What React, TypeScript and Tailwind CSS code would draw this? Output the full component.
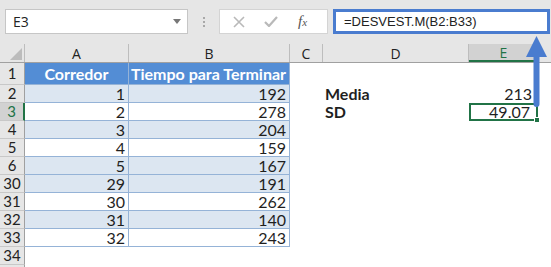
import React from "react";

const cellFont = { fontFamily: "Lato, 'Open Sans', sans-serif" };

type Row = { n: string; a?: string; b?: string; band?: boolean; header?: boolean; d?: string; e?: string; active?: boolean };

const rows: Row[] = [
  { n: "1", a: "Corredor", b: "Tiempo para Terminar", header: true },
  { n: "2", a: "1", b: "192", band: true, d: "Media", e: "213" },
  { n: "3", a: "2", b: "278", d: "SD", e: "49.07", active: true },
  { n: "4", a: "3", b: "204", band: true },
  { n: "5", a: "4", b: "159" },
  { n: "6", a: "5", b: "167", band: true },
  { n: "30", a: "29", b: "191", band: true },
  { n: "31", a: "30", b: "262" },
  { n: "32", a: "31", b: "140", band: true },
  { n: "33", a: "32", b: "243" },
  { n: "34" },
];

export default function App() {
  return (
    <div className="relative w-[551px] h-[267px] overflow-hidden bg-white text-[#1f1f1f]">
      {/* Formula bar area */}
      <div className="h-[44px] bg-[#e6e6e6] flex items-start pt-[9px]">
        <div className="ml-[5px] w-[183px] h-[25px] bg-white border border-[#c6c6c6] flex items-center justify-between pl-[7px] pr-[6px]">
          <span className="text-[14px] text-[#222]" style={{ fontFamily: "'Open Sans', sans-serif" }}>E3</span>
          <svg width="8" height="5" viewBox="0 0 8 5"><path d="M0 0h8L4 5z" fill="#777" /></svg>
        </div>
        <div className="w-[31px] h-[25px] flex flex-col items-center justify-center gap-[2px]">
          <div className="w-[2px] h-[2px] bg-[#a8a8a8]" />
          <div className="w-[2px] h-[2px] bg-[#a8a8a8]" />
          <div className="w-[2px] h-[2px] bg-[#a8a8a8]" />
        </div>
        <div className="w-[109px] h-[25px] bg-white border border-[#d4d4d4] flex items-center">
          <svg className="ml-[13px]" width="12" height="12" viewBox="0 0 12 12"><path d="M1 1l10 10M11 1L1 11" stroke="#b9b9b9" strokeWidth="1.6" /></svg>
          <svg className="ml-[19px]" width="14" height="11" viewBox="0 0 14 11"><path d="M1 6l4 4L13 1" stroke="#b9b9b9" strokeWidth="2.2" fill="none" /></svg>
          <span className="ml-[20px] text-[15px] italic text-[#555]" style={{ fontFamily: "'Liberation Serif', serif" }}>f<span className="text-[11px]">x</span></span>
        </div>
        <div className="ml-[5px] w-[217px] h-[25px] bg-white border-[3px] border-[#4a7ccf] flex items-center pl-[8px]">
          <span className="text-[13px] text-[#222]" style={{ fontFamily: "'Liberation Sans', sans-serif" }}>=DESVEST.M(B2:B33)</span>
        </div>
      </div>

      {/* Column header */}
      <div className="flex h-[19px] bg-[#e6e6e6] border-b border-[#a0a0a0] text-[14px] text-[#222]" style={{ fontFamily: "'Open Sans', sans-serif" }}>
        <div className="w-[25px] shrink-0 relative border-r border-[#bdbdbd]">
          <svg className="absolute right-[2px] bottom-[2px]" width="12" height="12" viewBox="0 0 12 12"><path d="M12 0V12H0z" fill="#bcbcbc" /></svg>
        </div>
        <div className="w-[104px] shrink-0 border-r border-[#bdbdbd] flex items-center justify-center">A</div>
        <div className="w-[161px] shrink-0 border-r border-[#bdbdbd] flex items-center justify-center">B</div>
        <div className="w-[33px] shrink-0 border-r border-[#bdbdbd] flex items-center justify-center">C</div>
        <div className="w-[146px] shrink-0 border-r border-[#bdbdbd] flex items-center justify-center">D</div>
        <div className="w-[69px] shrink-0 bg-[#d2d2d2] border-b-2 border-[#217346] text-[#217346] flex items-center justify-center">E</div>
        <div className="flex-1 border-l border-[#bdbdbd]" />
      </div>

      {/* Rows */}
      {rows.map((r, i) => (
        <div key={r.n} className={`flex ${i === 0 ? "h-[22px]" : "h-[18px]"} text-[16px]`} style={cellFont}>
          <div
            className={`w-[25px] shrink-0 flex items-center justify-center border-b border-[#c8c8c8] text-[15px] ${
              r.active ? "bg-[#d2d2d2] text-[#217346] border-r-2 border-r-[#217346]" : "bg-[#e6e6e6] text-[#222] border-r border-r-[#a0a0a0]"
            }`}
          >
            {r.n}
          </div>
          {r.n === "34" ? (
            <div className="flex-1" />
          ) : (
            <>
              <div
                className={`w-[104px] shrink-0 flex items-center justify-end pr-[3px] border-b border-r ${
                  r.header ? "bg-[#538dd5] text-white font-bold justify-center border-[#95b3d7] border-r-[#95b3d7]" : r.band ? "bg-[#dce6f1] border-[#95b3d7]" : "bg-white border-[#95b3d7]"
                }`}
              >
                {r.header ? <span className="w-full text-center pl-[3px]">{r.a}</span> : r.a}
              </div>
              <div
                className={`w-[161px] shrink-0 flex items-center justify-end pr-[3px] border-b border-r ${
                  r.header ? "bg-[#538dd5] text-white font-bold border-[#95b3d7]" : r.band ? "bg-[#dce6f1] border-[#95b3d7]" : "bg-white border-[#95b3d7]"
                }`}
              >
                {r.b}
              </div>
              <div className="w-[33px] shrink-0" />
              <div className="w-[146px] shrink-0 flex items-center pl-[2px] font-bold">{r.d}</div>
              <div
                className={`relative w-[69px] shrink-0 flex items-center justify-end pr-[6px] ${r.active ? "border-2 border-[#217346]" : ""}`}
              >
                {r.e}
                {r.active && <div className="absolute right-[-4px] bottom-[-4px] w-[6px] h-[6px] bg-[#217346] border border-white" />}
              </div>
              <div className="flex-1" />
            </>
          )}
        </div>
      ))}
      <div className="flex h-[10px]">
        <div className="w-[25px] bg-[#e6e6e6] border-r border-[#a0a0a0]" />
      </div>

      {/* Arrow annotation */}
      <svg className="absolute left-0 top-0 pointer-events-none" width="551" height="267" viewBox="0 0 551 267">
        <path d="M536.5 54 L536.5 104" stroke="#4a7ccf" strokeWidth="6" strokeLinecap="round" />
        <path d="M536.5 36 L547 57 L526 57 Z" fill="#4a7ccf" />
      </svg>
    </div>
  );
}
